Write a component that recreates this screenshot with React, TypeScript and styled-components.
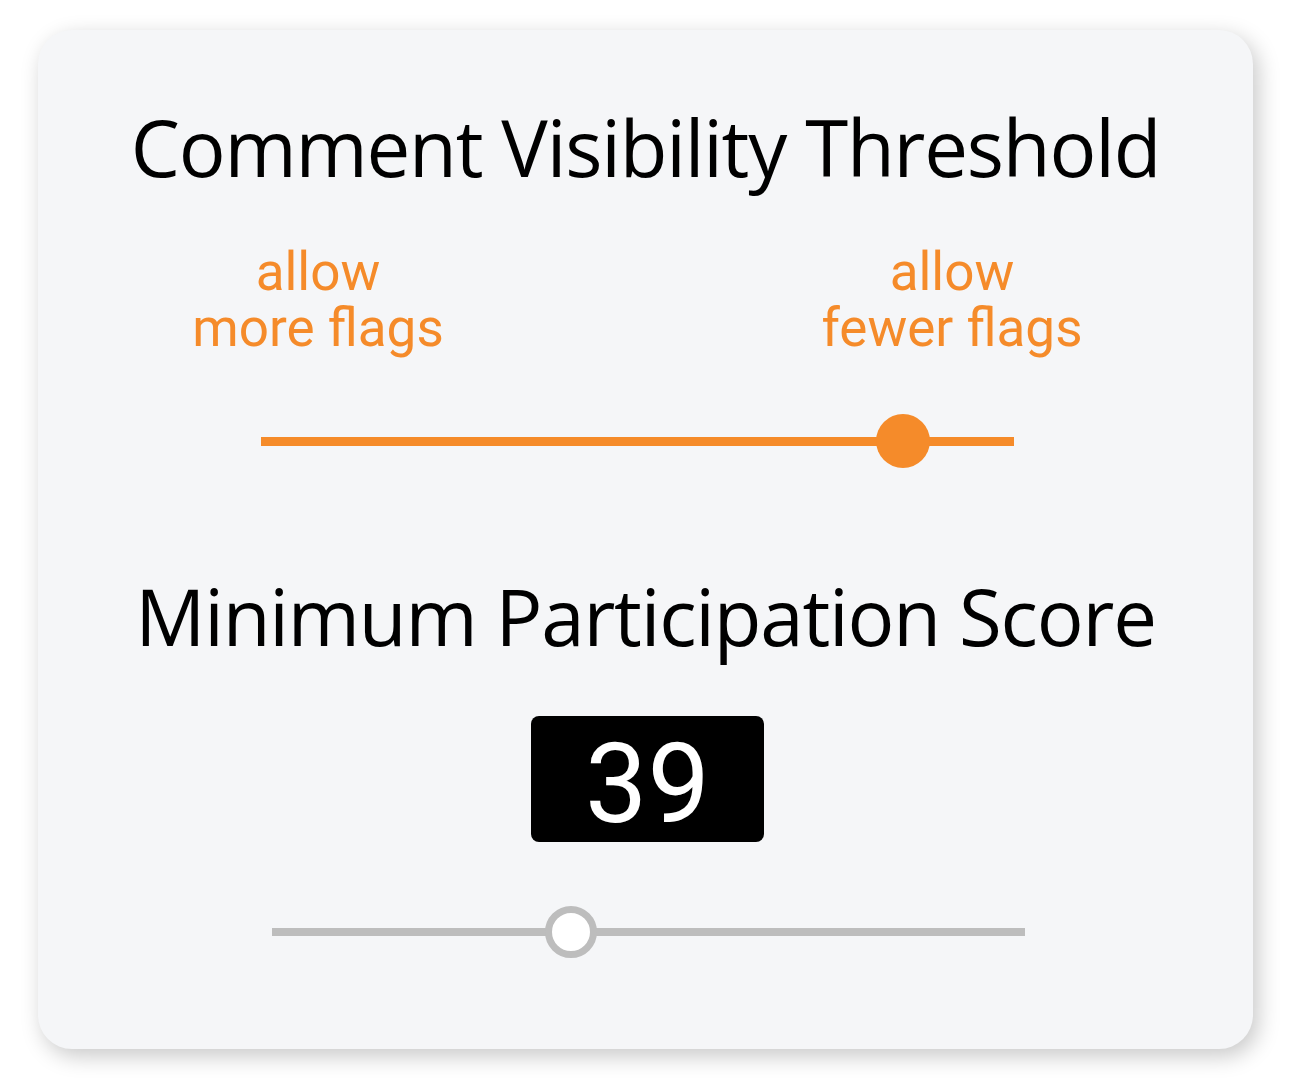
import React from "react";
import styled, { createGlobalStyle } from "styled-components";

const GlobalStyle = createGlobalStyle`
  html, body {
    margin: 0;
    padding: 0;
    background: #ffffff;
  }
  * { box-sizing: border-box; }
`;

const ORANGE = "#f58b2a";
const GREY = "#bdbdbd";

const Page = styled.div`
  width: 1295px;
  height: 1090px;
  padding: 30px 0 0 38px;
`;

const Card = styled.section`
  width: 1215px;
  height: 1019px;
  border-radius: 34px;
  background: #f5f6f8;
  box-shadow: 5px 7px 22px rgba(0, 0, 0, 0.22);
  padding-top: 69px;
  display: flex;
  flex-direction: column;
  align-items: center;
`;

const Heading = styled.h2<{ $gap?: number }>`
  margin: ${(p) => p.$gap ?? 0}px 0 0;
  font-family: "Open Sans", "Noto Sans", sans-serif;
  font-weight: 400;
  font-size: 78px;
  letter-spacing: -1.2px;
  line-height: 96px;
  color: #000;
  white-space: nowrap;
`;

const LabelRow = styled.div`
  align-self: stretch;
  display: flex;
  justify-content: space-between;
  padding: 0 151px 0 130px;
  margin-top: 49px;
`;

const Label = styled.div`
  width: 300px;
  text-align: center;
  font-family: Roboto, "Noto Sans", sans-serif;
  font-size: 53px;
  line-height: 56px;
  color: ${ORANGE};
`;

const Slider = styled.div<{ $offset: number; $gap: number; $height: number }>`
  position: relative;
  align-self: flex-start;
  margin: ${(p) => p.$gap}px 0 0 ${(p) => p.$offset}px;
  width: 753px;
  height: ${(p) => p.$height}px;
  display: flex;
  align-items: center;
`;

const Track = styled.div<{ $color: string; $thickness: number }>`
  width: 100%;
  height: ${(p) => p.$thickness}px;
  background: ${(p) => p.$color};
`;

const FilledThumb = styled.div`
  position: absolute;
  top: 0;
  width: 54px;
  height: 54px;
  border-radius: 50%;
  background: ${ORANGE};
`;

const RingThumb = styled.div`
  position: absolute;
  top: 0;
  width: 52px;
  height: 52px;
  border-radius: 50%;
  background: #ffffff;
  border: 7px solid ${GREY};
`;

const ScoreBox = styled.div`
  margin: 52px 0 0 4px;
  width: 233px;
  height: 126px;
  border-radius: 8px;
  background: #000;
  color: #fff;
  font-family: Roboto, "Noto Sans", sans-serif;
  font-size: 111px;
  line-height: 116px;
  padding-top: 10px;
  text-align: center;
`;

const thumbLeft = (value: number, width: number, thumb: number) =>
  `${(value / 100) * (width - thumb)}px`;

export default function App() {
  const threshold = 88;
  const score = 39;
  return (
    <>
      <GlobalStyle />
      <Page>
        <Card>
          <Heading>Comment Visibility Threshold</Heading>
          <LabelRow>
            <Label>
              allow
              <br />
              more flags
            </Label>
            <Label>
              allow
              <br />
              fewer flags
            </Label>
          </LabelRow>
          <Slider $offset={223} $gap={58} $height={54} role="slider" aria-valuenow={threshold}>
            <Track $color={ORANGE} $thickness={9} />
            <FilledThumb style={{ left: thumbLeft(threshold, 753, 54) }} />
          </Slider>
          <Heading $gap={100}>Minimum Participation Score</Heading>
          <ScoreBox>{score}</ScoreBox>
          <Slider $offset={234} $gap={64} $height={52} role="slider" aria-valuenow={score}>
            <Track $color={GREY} $thickness={8} />
            <RingThumb style={{ left: thumbLeft(score, 753, 52) }} />
          </Slider>
        </Card>
      </Page>
    </>
  );
}
